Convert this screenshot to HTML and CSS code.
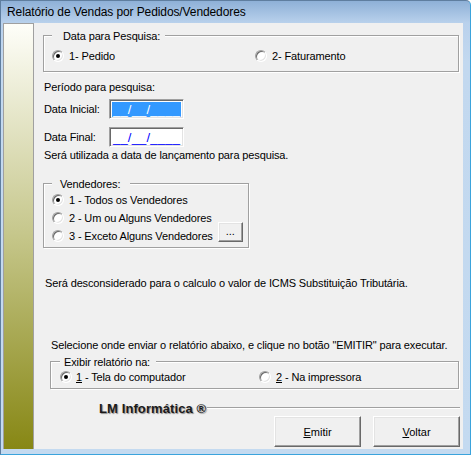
FILE: index.html
```html
<!DOCTYPE html>
<html lang="pt">
<head>
<meta charset="utf-8">
<title>Relatório de Vendas por Pedidos/Vendedores</title>
<link rel="stylesheet" href="styles.css">
</head>
<body>
<div class="window">
  <div class="titlebar">Relatório de Vendas por Pedidos/Vendedores</div>
  <div class="client">
    <div class="sidebar"></div>
    <div class="content">
      <fieldset class="group g-data">
        <legend>Data para Pesquisa:</legend>
        <div class="opts opts-data">
          <label class="opt opt-first"><span class="radio checked"></span>1- Pedido</label>
          <label class="opt"><span class="radio"></span>2- Faturamento</label>
        </div>
      </fieldset>

      <p class="line periodo">Período para pesquisa:</p>

      <div class="field field-1">
        <span class="field-label">Data Inicial:</span>
        <span class="mask-input"><span class="mask selected">__/__/____</span></span>
      </div>
      <div class="field field-2">
        <span class="field-label">Data Final:</span>
        <span class="mask-input"><span class="mask">__/__/____</span></span>
      </div>

      <p class="line nota">Será utilizada a data de lançamento para pesquisa.</p>

      <fieldset class="group g-vend">
        <legend>Vendedores:</legend>
        <div class="opts opts-vend">
          <label class="opt"><span class="radio checked"></span>1 - Todos os Vendedores</label>
          <label class="opt"><span class="radio"></span>2 - Um ou Alguns Vendedores</label>
          <label class="opt"><span class="radio"></span>3 - Exceto Alguns Vendedores<button class="btn btn-dots" type="button">...</button></label>
        </div>
      </fieldset>

      <p class="line icms">Será desconsiderado para o calculo o valor de ICMS Substituição Tributária.</p>

      <p class="line selecione">Selecione onde enviar o relatório abaixo, e clique no botão "EMITIR" para executar.</p>

      <fieldset class="group g-exibir">
        <legend>Exibir relatório na:</legend>
        <div class="opts opts-exibir">
          <label class="opt opt-first-ex"><span class="radio checked"></span><span><u>1</u> - Tela do computador</span></label>
          <label class="opt"><span class="radio"></span><span><u>2</u> - Na impressora</span></label>
        </div>
      </fieldset>

      <div class="brand">
        <span class="brand-name">LM Informática ®</span>
        <span class="brand-line"></span>
      </div>

      <div class="actions">
        <button class="btn btn-main" type="button"><u>E</u>mitir</button>
        <button class="btn btn-main" type="button"><u>V</u>oltar</button>
      </div>
    </div>
  </div>
</div>
</body>
</html>
```

FILE: styles.css
```css
html, body {
  margin: 0;
  padding: 0;
  background: #ffffff;
}

body {
  font-family: "Liberation Sans", Arial, sans-serif;
  font-size: 11px;
  color: #000;
}

.window {
  width: 471px;
  height: 455px;
  box-sizing: border-box;
  border: 1px solid #5f7e9f;
  border-right-color: #3aa3dc;
  border-bottom-color: #3aa3dc;
  border-top-right-radius: 5px;
  background: linear-gradient(#8eb0d7, #b9d1ec 22px, #c2d8ef 60px, #c4daf0);
  display: flex;
  flex-direction: column;
}

.titlebar {
  height: 22px;
  line-height: 23px;
  padding-left: 6px;
  font-size: 12px;
  letter-spacing: -0.1px;
  color: #000;
  white-space: nowrap;
}

.client {
  flex: 1;
  display: flex;
  margin: 0 7px 5px 2px;
}

.sidebar {
  width: 29px;
  border: 1px solid #a0a0a0;
  border-bottom: none;
  background: linear-gradient(#fefef9, #c5c68a 50%, #878714);
}

.content {
  flex: 1;
  background: #f0f0f0;
  padding: 0 3px 0 9px;
  display: flex;
  flex-direction: column;
  align-items: flex-start;
  letter-spacing: -0.13px;
}

/* group boxes */
.group {
  margin: 0;
  padding: 0;
  min-width: 0;
  border: 1px solid #a0a0a0;
  box-shadow: inset 1px 1px 0 #ffffff, 1px 1px 0 #ffffff;
  box-sizing: border-box;
}

.group legend {
  line-height: 13px;
  padding: 2px 5px 0 11px;
  margin-left: 8px;
  background: #f0f0f0;
  white-space: nowrap;
}

.g-data {
  margin-top: 5px;
  width: 416px;
}

.g-vend {
  margin-top: 14px;
  width: 206px;
}

.g-vend legend {
  padding-left: 8px;
  padding-right: 10px;
}

.g-exibir {
  margin-top: 2px;
  margin-left: 7px;
  width: 409px;
}

.g-exibir legend {
  margin-left: 9px;
  padding-left: 4px;
  padding-right: 6px;
}

.opts {
  display: flex;
}

.opts-data {
  padding: 6px 0 8px 8px;
}

.opts-vend {
  flex-direction: column;
  padding: 0 0 2px 8px;
}

.opts-exibir {
  padding: 1px 0 4px 9px;
}

.opt {
  display: flex;
  align-items: center;
  height: 14px;
  line-height: 14px;
  gap: 5px;
  white-space: nowrap;
}

.opts-vend .opt {
  height: 18px;
}

.opt-first {
  width: 203px;
}

.opt-first-ex {
  width: 199px;
  gap: 4px;
}

.radio {
  position: relative;
  width: 12px;
  height: 12px;
  box-sizing: border-box;
  border-radius: 50%;
  border: 1px solid;
  border-color: #a0a0a0 #ffffff #ffffff #a0a0a0;
  background: #ffffff;
  box-shadow: inset 1px 1px 0 #696969, inset -1px -1px 0 #e3e3e3;
  flex: none;
}

.radio.checked::after {
  content: "";
  position: absolute;
  left: 3px;
  top: 3px;
  width: 4px;
  height: 4px;
  border-radius: 50%;
  background: #000;
}

/* text lines */
.line {
  margin: 0;
  line-height: 14px;
  white-space: nowrap;
}

.periodo {
  margin-top: 8px;
  padding-left: 1px;
}

.nota {
  margin-top: 1px;
  padding-left: 1px;
}

.icms {
  margin-top: 28px;
  padding-left: 2px;
}

.selecione {
  margin-top: 48px;
  padding-left: 8px;
}

/* date fields */
.field {
  display: flex;
  align-items: center;
  padding-left: 1px;
}

.field-1 {
  margin-top: 5px;
}

.field-2 {
  margin-top: 8px;
}

.field-label {
  width: 65px;
}

.mask-input {
  width: 75px;
  height: 20px;
  box-sizing: border-box;
  border: 1px solid;
  border-color: #a0a0a0 #ffffff #ffffff #a0a0a0;
  box-shadow: inset 1px 1px 0 #696969, inset -1px -1px 0 #e3e3e3;
  background: #ffffff;
  padding: 2px 0 0 2px;
  display: flex;
  align-items: flex-start;
}

.mask {
  font-size: 13px;
  line-height: 15px;
  height: 15px;
  color: #0000ff;
  padding: 0 1px;
  letter-spacing: 0.2px;
}

.mask.selected {
  background: #3399ff;
  color: #ffffff;
}

/* buttons */
.btn {
  font-family: "Liberation Sans", Arial, sans-serif;
  font-size: 11px;
  color: #000;
  background: #f0f0f0;
  border: 1px solid;
  border-color: #ffffff #696969 #696969 #ffffff;
  box-shadow: inset -1px -1px 0 #a0a0a0, inset 1px 1px 0 #e3e3e3;
  padding: 0;
  margin: 0;
  box-sizing: border-box;
}

.btn-dots {
  width: 25px;
  height: 20px;
  margin-left: 0;
  margin-bottom: 8px;
  line-height: 14px;
  padding-bottom: 2px;
}

.brand {
  margin-top: 11px;
  margin-left: 56px;
  align-self: stretch;
  display: flex;
  align-items: center;
  height: 16px;
}

.brand-name {
  font-weight: bold;
  font-size: 13px;
  letter-spacing: 0.1px;
  color: #1a1a1a;
  text-shadow: 1px 1px 1px #8a8a8a;
  white-space: nowrap;
}

.brand-line {
  flex: 1;
  height: 0;
  border-top: 1px solid #a0a0a0;
  border-bottom: 1px solid #ffffff;
  margin-left: 1px;
}

.actions {
  align-self: stretch;
  display: flex;
  justify-content: flex-end;
  gap: 12px;
}

.btn-main {
  width: 87px;
  height: 31px;
}
```
